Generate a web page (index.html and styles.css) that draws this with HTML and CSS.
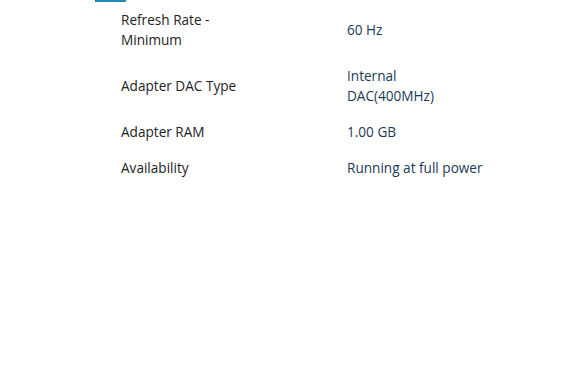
FILE: index.html
```html
<!DOCTYPE html>
<html lang="en">

<head>
    <meta charset="UTF-8">
    <meta name="viewport" content="width=device-width, initial-scale=1.0">
    <title>Display Adapter</title>
    <link rel="stylesheet" href="styles.css">
</head>

<body>
    <div class="panel">
        <div class="tab-line"></div>
        <div class="specs">
            <div class="row">
                <div class="label">Refresh Rate - Minimum</div>
                <div class="value">60 Hz</div>
            </div>
            <div class="row">
                <div class="label">Adapter DAC Type</div>
                <div class="value">Internal DAC(400MHz)</div>
            </div>
            <div class="row">
                <div class="label">Adapter RAM</div>
                <div class="value">1.00 GB</div>
            </div>
            <div class="row">
                <div class="label">Availability</div>
                <div class="value">Running at full power</div>
            </div>
        </div>
    </div>
</body>

</html>
```

FILE: styles.css
```css
* {
    margin: 0;
    padding: 0;
    box-sizing: border-box;
}

body {
    background: #fff;
    font-family: "Open Sans", "Noto Sans", sans-serif;
    font-size: 13.6px;
    line-height: 20px;
}

.panel {
    margin-left: 95px;
}

.tab-line {
    width: 31px;
    height: 2px;
    background-color: #1f8cb4;
}

.specs {
    padding-left: 26px;
}

.row {
    display: grid;
    grid-template-columns: 140px 138px;
    column-gap: 86px;
    align-items: center;
    padding: 8px 0;
}

.label {
    color: #222;
}

.value {
    color: #1b3a57;
}
```
